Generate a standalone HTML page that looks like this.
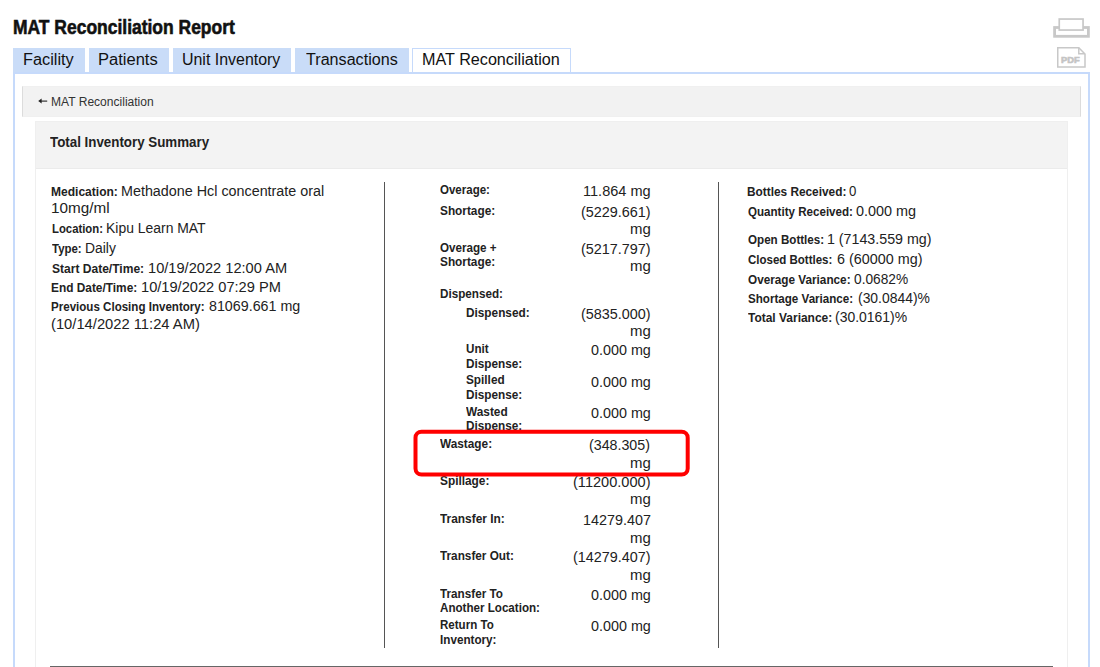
<!DOCTYPE html>
<html><head><meta charset="utf-8">
<style>
html,body{margin:0;padding:0;}
body{width:1100px;height:667px;overflow:hidden;position:relative;background:#fff;font-family:"Liberation Sans",sans-serif;color:#222;}
.t{position:absolute;white-space:nowrap;transform-origin:0 0;}
.b{position:absolute;box-sizing:border-box;}
.tab{position:absolute;top:48px;height:24px;background:#c9dcf8;}
</style></head><body>
<div class="tab" style="left:13px;width:72px;"></div>
<div class="tab" style="left:89px;width:79.5px;"></div>
<div class="tab" style="left:172.5px;width:118px;"></div>
<div class="tab" style="left:295px;width:113.5px;"></div>
<div class="b" style="left:412px;top:47.5px;width:158.5px;height:26px;background:#fff;border:1.5px solid #c6dafb;border-bottom:none;"></div>
<div class="b" style="left:13px;top:72px;width:1077px;height:700px;border:2px solid #c6dafb;"></div>
<div class="b" style="left:22px;top:86px;width:1059px;height:30.5px;background:#f2f2f2;border:1px solid #f0f0f0;border-left-color:#dcdcdc;border-right-color:#dcdcdc;"></div>
<svg class="b" style="left:0;top:0;" width="1100" height="667">
<path d="M38.2,101.1 L41.6,98.6 L41.6,103.6 Z" fill="#222"/><path d="M40.5,101.1 H47.2" fill="none" stroke="#222" stroke-width="1.1"/>
</svg>
<div class="b" style="left:35px;top:121px;width:1033px;height:600px;background:#fff;border:1px solid #efefef;"></div>
<div class="b" style="left:36px;top:122px;width:1031px;height:47px;background:#f3f3f3;border-bottom:1px solid #ebebeb;"></div>
<div class="b" style="left:384px;top:182px;width:1px;height:466px;background:#555;"></div>
<div class="b" style="left:718px;top:182px;width:1px;height:466px;background:#555;"></div>
<div class="b" style="left:50px;top:665.5px;width:1003px;height:2px;background:#666;"></div>
<svg class="b" style="left:0;top:0;" width="1100" height="667">
<rect x="1054.6" y="27.5" width="33.8" height="8.8" fill="none" stroke="#c8c8c8" stroke-width="2.8"/>
<rect x="1059.25" y="19.05" width="23.8" height="11" fill="#fff" stroke="#c8c8c8" stroke-width="1.7"/>
<path d="M1057.75,47.75 H1078.8 L1085,54 V67.05 H1057.75 Z" fill="none" stroke="#c8c8c8" stroke-width="1.5"/>
<path d="M1078.8,47.75 V53.8 H1085" fill="none" stroke="#c8c8c8" stroke-width="1.5"/>
</svg>
<span class="t" style="left:13.21px;top:16.00px;font-size:20px;line-height:22.344px;font-weight:bold;color:#111;-webkit-text-stroke:0.6px #111;transform:scaleX(0.8729);">MAT Reconciliation Report</span>
<span class="t" style="left:23.23px;top:51.00px;font-size:16px;line-height:17.875px;color:#111;transform:scaleX(1.0200);">Facility</span>
<span class="t" style="left:98.21px;top:51.00px;font-size:16px;line-height:17.875px;color:#111;transform:scaleX(1.0328);">Patients</span>
<span class="t" style="left:181.70px;top:51.00px;font-size:16px;line-height:17.875px;color:#111;transform:scaleX(0.9958);">Unit Inventory</span>
<span class="t" style="left:305.95px;top:51.00px;font-size:16px;line-height:17.875px;color:#111;transform:scaleX(1.0083);">Transactions</span>
<span class="t" style="left:422.14px;top:51.00px;font-size:16px;line-height:17.875px;color:#111;transform:scaleX(1.0105);">MAT Reconciliation</span>
<span class="t" style="left:50.96px;top:96.00px;font-size:12px;line-height:13.406px;color:#333;transform:scaleX(1.0043);">MAT Reconciliation</span>
<span class="t" style="left:50.40px;top:135.00px;font-size:14px;line-height:15.641px;font-weight:bold;transform:scaleX(0.9528);">Total Inventory Summary</span>
<span class="t" style="left:1061.22px;top:55.00px;font-size:9px;line-height:10.055px;font-weight:bold;color:#c4c4c4;-webkit-text-stroke:0.6px #c4c4c4;transform:scaleX(1.0325);">PDF</span>
<span class="t" style="left:51.15px;top:186.00px;font-size:12px;line-height:13.406px;font-weight:bold;transform:scaleX(1.0027);">Medication:</span>
<span class="t" style="left:120.88px;top:184.00px;font-size:14px;line-height:15.641px;transform:scaleX(1.0238);">Methadone Hcl concentrate oral</span>
<span class="t" style="left:51.45px;top:201.00px;font-size:14px;line-height:15.641px;transform:scaleX(1.0909);">10mg/ml</span>
<span class="t" style="left:51.69px;top:223.00px;font-size:12px;line-height:13.406px;font-weight:bold;transform:scaleX(0.9436);">Location:</span>
<span class="t" style="left:106.41px;top:221.00px;font-size:14px;line-height:15.641px;transform:scaleX(0.9951);">Kipu Learn MAT</span>
<span class="t" style="left:52.40px;top:243.00px;font-size:12px;line-height:13.406px;font-weight:bold;transform:scaleX(0.9529);">Type:</span>
<span class="t" style="left:84.81px;top:241.00px;font-size:14px;line-height:15.641px;transform:scaleX(0.9926);">Daily</span>
<span class="t" style="left:51.91px;top:263.00px;font-size:12px;line-height:13.406px;font-weight:bold;transform:scaleX(1.0031);">Start Date/Time:</span>
<span class="t" style="left:148.09px;top:261.00px;font-size:14px;line-height:15.641px;transform:scaleX(1.0450);">10/19/2022 12:00 AM</span>
<span class="t" style="left:51.36px;top:282.00px;font-size:12px;line-height:13.406px;font-weight:bold;transform:scaleX(0.9897);">End Date/Time:</span>
<span class="t" style="left:141.29px;top:280.00px;font-size:14px;line-height:15.641px;transform:scaleX(1.0450);">10/19/2022 07:29 PM</span>
<span class="t" style="left:51.38px;top:301.00px;font-size:12px;line-height:13.406px;font-weight:bold;transform:scaleX(0.9637);">Previous Closing Inventory:</span>
<span class="t" style="left:208.85px;top:299.00px;font-size:14px;line-height:15.641px;transform:scaleX(1.0193);">81069.661 mg</span>
<span class="t" style="left:51.41px;top:317.00px;font-size:14px;line-height:15.641px;transform:scaleX(1.0527);">(10/14/2022 11:24 AM)</span>
<span class="t" style="left:440.04px;top:184.00px;font-size:12px;line-height:13.406px;font-weight:bold;transform:scaleX(0.9594);">Overage:</span>
<span class="t" style="left:440.22px;top:205.00px;font-size:12px;line-height:13.406px;font-weight:bold;transform:scaleX(0.9850);">Shortage:</span>
<span class="t" style="left:440.04px;top:242.00px;font-size:12px;line-height:13.406px;font-weight:bold;transform:scaleX(0.9696);">Overage +</span>
<span class="t" style="left:440.22px;top:256.00px;font-size:12px;line-height:13.406px;font-weight:bold;transform:scaleX(0.9850);">Shortage:</span>
<span class="t" style="left:439.67px;top:288.00px;font-size:12px;line-height:13.406px;font-weight:bold;transform:scaleX(0.9724);">Dispensed:</span>
<span class="t" style="left:465.56px;top:307.00px;font-size:12px;line-height:13.406px;font-weight:bold;transform:scaleX(0.9835);">Dispensed:</span>
<span class="t" style="left:465.75px;top:343.00px;font-size:12px;line-height:13.406px;font-weight:bold;transform:scaleX(0.9689);">Unit</span>
<span class="t" style="left:465.56px;top:358.00px;font-size:12px;line-height:13.406px;font-weight:bold;transform:scaleX(0.9801);">Dispense:</span>
<span class="t" style="left:466.12px;top:374.00px;font-size:12px;line-height:13.406px;font-weight:bold;transform:scaleX(0.9822);">Spilled</span>
<span class="t" style="left:465.56px;top:389.00px;font-size:12px;line-height:13.406px;font-weight:bold;transform:scaleX(0.9801);">Dispense:</span>
<span class="t" style="left:466.30px;top:406.00px;font-size:12px;line-height:13.406px;font-weight:bold;transform:scaleX(0.9865);">Wasted</span>
<span class="t" style="left:465.56px;top:420.00px;font-size:12px;line-height:13.406px;font-weight:bold;transform:scaleX(0.9801);">Dispense:</span>
<span class="t" style="left:440.40px;top:438.00px;font-size:12px;line-height:13.406px;font-weight:bold;transform:scaleX(0.9845);">Wastage:</span>
<span class="t" style="left:440.21px;top:475.00px;font-size:12px;line-height:13.406px;font-weight:bold;transform:scaleX(0.9872);">Spillage:</span>
<span class="t" style="left:440.40px;top:513.00px;font-size:12px;line-height:13.406px;font-weight:bold;transform:scaleX(0.9914);">Transfer In:</span>
<span class="t" style="left:440.40px;top:550.00px;font-size:12px;line-height:13.406px;font-weight:bold;transform:scaleX(0.9805);">Transfer Out:</span>
<span class="t" style="left:440.40px;top:588.00px;font-size:12px;line-height:13.406px;font-weight:bold;transform:scaleX(0.9756);">Transfer To</span>
<span class="t" style="left:440.22px;top:602.00px;font-size:12px;line-height:13.406px;font-weight:bold;transform:scaleX(0.9673);">Another Location:</span>
<span class="t" style="left:439.68px;top:619.00px;font-size:12px;line-height:13.406px;font-weight:bold;transform:scaleX(0.9629);">Return To</span>
<span class="t" style="left:439.67px;top:634.00px;font-size:12px;line-height:13.406px;font-weight:bold;transform:scaleX(0.9740);">Inventory:</span>
<span class="t" style="left:583.29px;top:184.00px;font-size:14px;line-height:15.641px;transform:scaleX(1.0385);">11.864 mg</span>
<span class="t" style="left:580.63px;top:205.00px;font-size:14px;line-height:15.641px;transform:scaleX(1.0281);">(5229.661)</span>
<span class="t" style="left:629.87px;top:222.00px;font-size:14px;line-height:15.641px;transform:scaleX(1.0682);">mg</span>
<span class="t" style="left:580.63px;top:242.00px;font-size:14px;line-height:15.641px;transform:scaleX(1.0281);">(5217.797)</span>
<span class="t" style="left:629.87px;top:259.00px;font-size:14px;line-height:15.641px;transform:scaleX(1.0682);">mg</span>
<span class="t" style="left:580.63px;top:307.00px;font-size:14px;line-height:15.641px;transform:scaleX(1.0281);">(5835.000)</span>
<span class="t" style="left:629.87px;top:324.00px;font-size:14px;line-height:15.641px;transform:scaleX(1.0682);">mg</span>
<span class="t" style="left:591.05px;top:343.00px;font-size:14px;line-height:15.641px;transform:scaleX(1.0254);">0.000 mg</span>
<span class="t" style="left:591.05px;top:375.00px;font-size:14px;line-height:15.641px;transform:scaleX(1.0254);">0.000 mg</span>
<span class="t" style="left:591.05px;top:406.00px;font-size:14px;line-height:15.641px;transform:scaleX(1.0254);">0.000 mg</span>
<span class="t" style="left:589.33px;top:438.00px;font-size:14px;line-height:15.641px;transform:scaleX(1.0162);">(348.305)</span>
<span class="t" style="left:629.87px;top:456.00px;font-size:14px;line-height:15.641px;transform:scaleX(1.0682);">mg</span>
<span class="t" style="left:572.72px;top:475.00px;font-size:14px;line-height:15.641px;transform:scaleX(1.0413);">(11200.000)</span>
<span class="t" style="left:629.87px;top:492.00px;font-size:14px;line-height:15.641px;transform:scaleX(1.0682);">mg</span>
<span class="t" style="left:582.80px;top:513.00px;font-size:14px;line-height:15.641px;transform:scaleX(1.0257);">14279.407</span>
<span class="t" style="left:629.87px;top:531.00px;font-size:14px;line-height:15.641px;transform:scaleX(1.0682);">mg</span>
<span class="t" style="left:572.73px;top:550.00px;font-size:14px;line-height:15.641px;transform:scaleX(1.0267);">(14279.407)</span>
<span class="t" style="left:629.87px;top:568.00px;font-size:14px;line-height:15.641px;transform:scaleX(1.0682);">mg</span>
<span class="t" style="left:591.05px;top:588.00px;font-size:14px;line-height:15.641px;transform:scaleX(1.0254);">0.000 mg</span>
<span class="t" style="left:591.05px;top:619.00px;font-size:14px;line-height:15.641px;transform:scaleX(1.0254);">0.000 mg</span>
<span class="t" style="left:747.26px;top:186.00px;font-size:12px;line-height:13.406px;font-weight:bold;transform:scaleX(0.9863);">Bottles Received:</span>
<span class="t" style="left:848.99px;top:184.00px;font-size:14px;line-height:15.641px;transform:scaleX(0.9429);">0</span>
<span class="t" style="left:747.64px;top:206.00px;font-size:12px;line-height:13.406px;font-weight:bold;transform:scaleX(0.9653);">Quantity Received:</span>
<span class="t" style="left:855.95px;top:204.00px;font-size:14px;line-height:15.641px;transform:scaleX(1.0289);">0.000 mg</span>
<span class="t" style="left:747.64px;top:234.00px;font-size:12px;line-height:13.406px;font-weight:bold;transform:scaleX(0.9677);">Open Bottles:</span>
<span class="t" style="left:827.11px;top:232.00px;font-size:14px;line-height:15.641px;transform:scaleX(1.0165);">1 (7143.559 mg)</span>
<span class="t" style="left:747.64px;top:254.00px;font-size:12px;line-height:13.406px;font-weight:bold;transform:scaleX(0.9580);">Closed Bottles:</span>
<span class="t" style="left:836.53px;top:252.00px;font-size:14px;line-height:15.641px;transform:scaleX(1.0258);">6 (60000 mg)</span>
<span class="t" style="left:747.63px;top:274.00px;font-size:12px;line-height:13.406px;font-weight:bold;transform:scaleX(0.9791);">Overage Variance:</span>
<span class="t" style="left:853.57px;top:272.00px;font-size:14px;line-height:15.641px;transform:scaleX(0.9795);">0.0682%</span>
<span class="t" style="left:747.82px;top:293.00px;font-size:12px;line-height:13.406px;font-weight:bold;transform:scaleX(0.9672);">Shortage Variance:</span>
<span class="t" style="left:858.15px;top:291.00px;font-size:14px;line-height:15.641px;transform:scaleX(0.9929);">(30.0844)%</span>
<span class="t" style="left:748.00px;top:312.00px;font-size:12px;line-height:13.406px;font-weight:bold;transform:scaleX(0.9967);">Total Variance:</span>
<span class="t" style="left:834.65px;top:310.00px;font-size:14px;line-height:15.641px;transform:scaleX(0.9957);">(30.0161)%</span>
<svg class="b" style="left:0;top:0;" width="1100" height="667">
<rect x="415.5" y="431.7" width="272.2" height="42.8" rx="6" ry="6" fill="none" stroke="#ff0000" stroke-width="4"/>
</svg>
</body></html>
